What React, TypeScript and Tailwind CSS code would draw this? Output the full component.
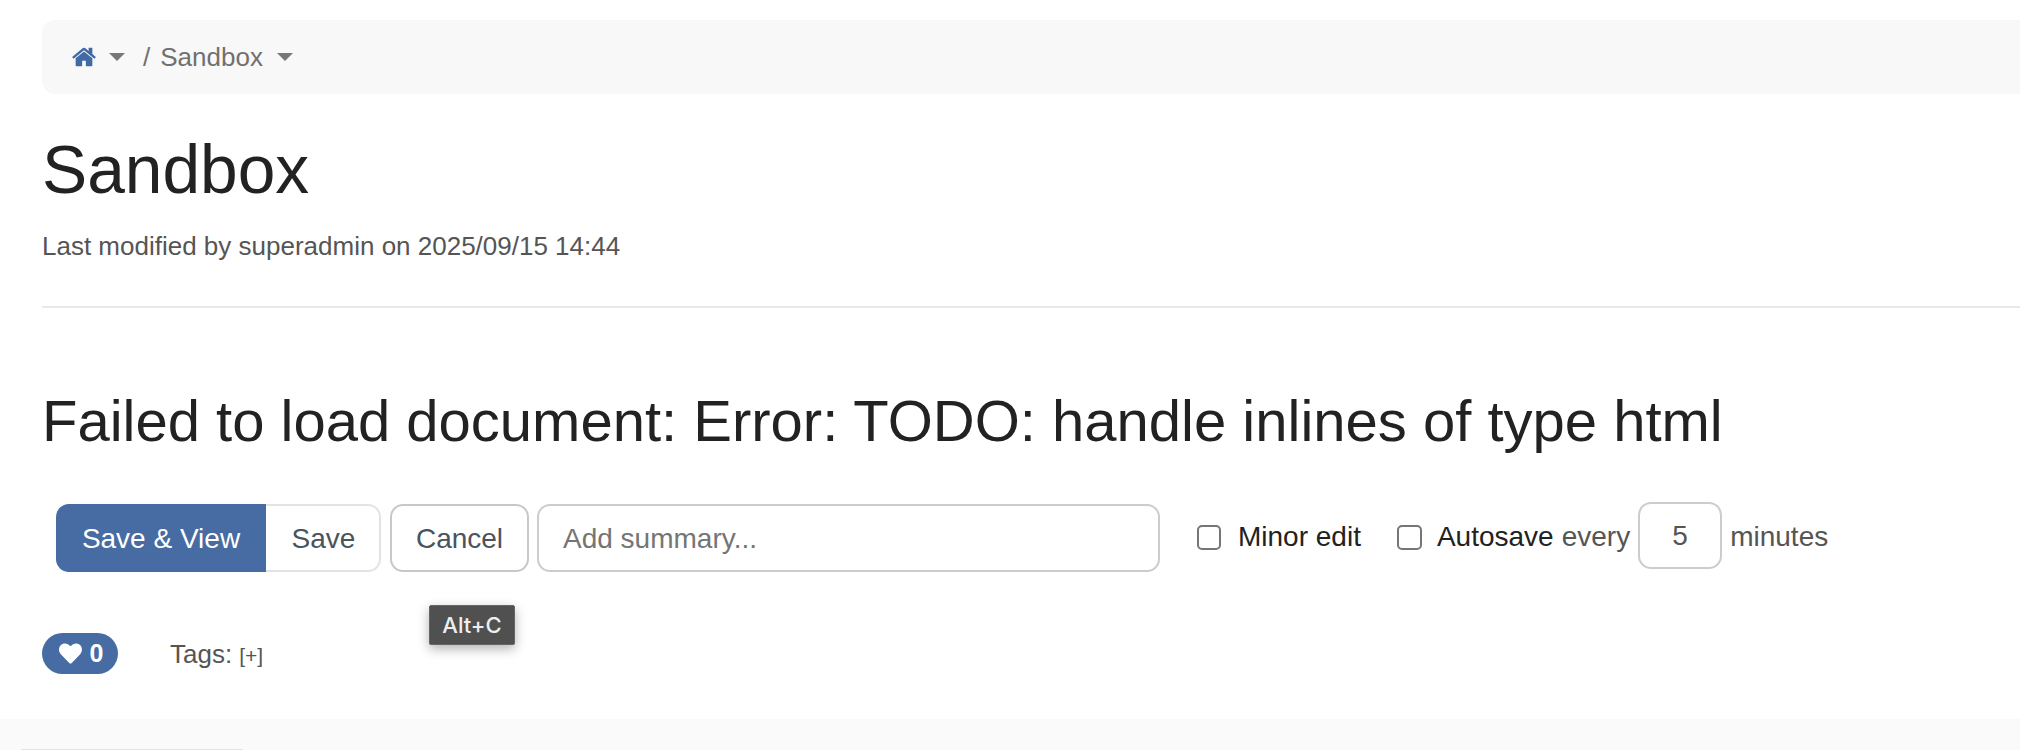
import React from "react";
import { FaHeart } from "react-icons/fa";

const Caret = () => (
  <span className="inline-block w-0 h-0 border-x-[8px] border-x-transparent border-t-[8px] border-t-[#777777]" />
);

const HomeIcon = () => (
  <svg viewBox="0 0 1792 1792" className="w-[26px] h-[26px] text-[#4169a4] -mx-px" fill="currentColor">
    <path d="M1472 992v480q0 26-19 45t-45 19h-384v-384h-256v384h-384q-26 0-45-19t-19-45v-480q0-1 .5-3t.5-3l575-474 575 474q1 2 1 6zm223-69l-62 74q-8 9-21 11h-3q-13 0-21-7l-692-577-692 577q-12 8-24 7-13-2-21-11l-62-74q-8-10-7-23.500t11-21.500l719-599q32-26 76-26t76 26l244 204v-195q0-14 9-23t23-9h192q14 0 23 9t9 23v408l219 182q10 8 11 21.500t-7 23.500z" />
  </svg>
);

export default function App() {
  return (
    <div className="relative h-[750px] overflow-hidden bg-white flex flex-col font-['Liberation_Sans',Arial,sans-serif] text-[#222222]">
      <div className="pl-[42px] pt-[20px] flex-1">
        <nav className="h-[74px] rounded-l-[13px] bg-[#f8f8f8] flex items-center pl-[30px] text-[26px] text-[#707070]">
          <HomeIcon />
          <span className="ml-[13px] mr-[18px] flex"><Caret /></span>
          <span>/</span>
          <span className="ml-[10px]">Sandbox</span>
          <span className="ml-[14px] flex"><Caret /></span>
        </nav>
        <h1 className="mt-[39px] text-[67.7px] leading-[74px] font-normal">Sandbox</h1>
        <p className="mt-[21px] text-[26px] leading-[36px] text-[#555555]">Last modified by superadmin on 2025/09/15 14:44</p>
        <hr className="mt-[42px] border-0 h-[2px] bg-[#e8e8e8]" />
        <h2 className="mt-[76px] text-[58px] leading-[74px] font-normal whitespace-nowrap">Failed to load document: Error: TODO: handle inlines of type html</h2>
        <div className="mt-[44px] ml-[14px] flex items-center h-[72px] text-[28px]">
          <button className="h-[68px] pt-[2px] w-[210px] rounded-l-[13px] bg-[#466ca3] text-white">Save &amp; View</button>
          <button className="h-[68px] pt-[2px] pl-[2px] w-[115px] rounded-r-[13px] border-2 border-l-0 border-[#e3e3e3] text-[#4b535c]">Save</button>
          <button className="ml-[9px] h-[68px] pt-[2px] w-[139px] rounded-[13px] border-2 border-[#c8c8c8] text-[#4b535c]">Cancel</button>
          <div className="ml-[8px] h-[68px] pt-[2px] w-[623px] rounded-[13px] border-2 border-[#cccccc] pl-[24px] flex items-center text-[#757575]">Add summary...</div>
          <span className="ml-[37px] -mt-[2px] w-[24px] h-[25px] rounded-[5px] border-2 border-[#767676]" />
          <span className="ml-[17px] -mt-[2px] text-[#222222]">Minor edit</span>
          <span className="ml-[36px] -mt-[2px] w-[25px] h-[25px] rounded-[5px] border-2 border-[#767676]" />
          <span className="ml-[15px] -mt-[2px] text-[#222222]">Autosave</span>
          <span className="ml-[8px] -mt-[2px] text-[#555555]">every</span>
          <div className="ml-[8px] -mt-[6px] pt-[2px] w-[84px] h-[67px] rounded-[13px] border-2 border-[#cccccc] flex items-center justify-center text-[#555555]">5</div>
          <span className="ml-[8px] -mt-[2px] text-[#555555]">minutes</span>
        </div>
        <div className="mt-[59px] flex items-center">
          <div className="w-[76px] h-[41px] rounded-full bg-[#466ca3] text-white flex items-center justify-center gap-[6px] font-bold text-[25px]">
            <FaHeart className="w-[27px] h-[23px]" />
            <span>0</span>
          </div>
          <span className="ml-[52px] mt-[1px] text-[26px] text-[#555555]">Tags:</span>
          <span className="ml-[7px] mt-[5px] text-[21px] text-[#555555]">[+]</span>
        </div>
      </div>
      <footer className="h-[31px] bg-[#fafafa] relative">
        <div className="absolute left-[21px] bottom-0 w-[222px] h-px bg-[#e4e4e4]" />
      </footer>
      <div className="absolute left-[429px] top-[605px] w-[86px] h-[40px] bg-[#505050] border border-[#666666] rounded-[2px] shadow-[0_4px_12px_rgba(0,0,0,0.3)] text-[#eeeeee] text-[22px] flex items-center justify-center font-['Inter',sans-serif] font-medium">Alt+C</div>
    </div>
  );
}
